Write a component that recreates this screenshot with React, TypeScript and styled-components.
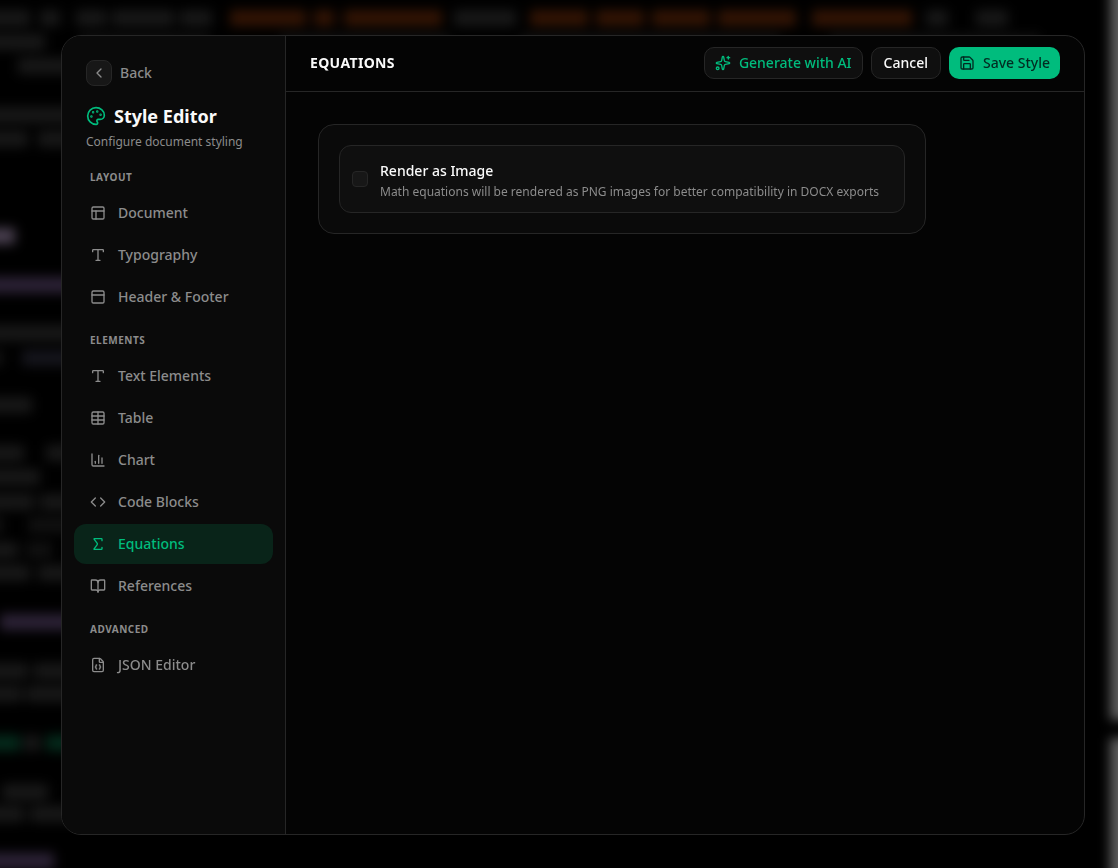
import React, { useState } from 'react';
import styled, { createGlobalStyle } from 'styled-components';
import {
  BookOpen,
  ChartColumn,
  ChevronLeft,
  Code,
  FileJson,
  Palette,
  PanelsTopLeft,
  PanelTop,
  Save,
  Sigma,
  Sparkles,
  Table,
  Type,
} from 'lucide-react';
import type { LucideIcon } from 'lucide-react';

const color = {
  accent: '#00bc7d',
  line: '#262626',
  panel: '#0a0a0a',
  raised: '#0f0f0f',
  control: '#171717',
  muted: '#8c8c8c',
  text: '#fafafa',
};

const GlobalStyle = createGlobalStyle`
  *, *::before, *::after { box-sizing: border-box; }
  body {
    margin: 0;
    background: #000;
    color: ${color.text};
    font-family: 'Noto Sans', sans-serif;
    font-size: 14px;
    line-height: 20px;
  }
  h1, h2, h3, p { margin: 0; }
  button { font: inherit; cursor: pointer; }
`;

const Overlay = styled.div`
  position: relative;
  display: flex;
  min-height: 100vh;
  padding: 35px 33px 33px 61px;
  overflow: hidden;
`;

const Backdrop = styled.svg`
  position: absolute;
  inset: 0;
  width: 100%;
  height: 100%;
`;

const Dialog = styled.div`
  position: relative;
  display: flex;
  flex: 1;
  min-width: 0;
  border: 1px solid ${color.line};
  border-radius: 20px;
  background: #040404;
  overflow: hidden;
`;

const Sidebar = styled.aside`
  flex: 0 0 224px;
  border-right: 1px solid ${color.line};
  background: ${color.panel};
`;

const SidebarHeader = styled.header`
  padding: 24px 24px 20px;
`;

const BackButton = styled.button`
  display: flex;
  align-items: center;
  gap: 8px;
  padding: 0;
  border: 0;
  background: none;
  color: ${color.muted};
  font-weight: 500;
`;

const BackIcon = styled.span`
  display: grid;
  place-items: center;
  width: 26px;
  height: 26px;
  border: 1px solid ${color.line};
  border-radius: 8px;
  background: ${color.control};
`;

const EditorTitle = styled.h1`
  display: flex;
  align-items: center;
  gap: 8px;
  margin-top: 16px;
  font-size: 18px;
  font-weight: 700;
  line-height: 28px;

  svg { color: ${color.accent}; }
`;

const Subtitle = styled.p`
  margin-top: 4px;
  color: ${color.muted};
  font-size: 12px;
  line-height: 16px;
`;

const Nav = styled.nav`
  display: flex;
  flex-direction: column;
  gap: 16px;
  padding: 0 12px 24px;
`;

const NavHeading = styled.h3`
  padding: 0 16px 8px;
  color: ${color.muted};
  font-size: 10px;
  font-weight: 700;
  line-height: 15px;
  letter-spacing: 0.05em;
  text-transform: uppercase;
`;

const NavList = styled.div`
  display: flex;
  flex-direction: column;
  gap: 2px;
`;

const NavItem = styled.button<{ $active: boolean }>`
  display: flex;
  align-items: center;
  gap: 12px;
  height: 40px;
  padding: 0 16px;
  border: 0;
  border-radius: 12px;
  background: ${({ $active }) => ($active ? '#092419' : 'transparent')};
  color: ${({ $active }) => ($active ? color.accent : color.muted)};
  font-weight: 500;
  text-align: left;
`;

const Content = styled.main`
  flex: 1;
  min-width: 0;
`;

const Toolbar = styled.header`
  display: flex;
  align-items: center;
  justify-content: space-between;
  height: 56px;
  padding: 0 24px 1px;
  border-bottom: 1px solid ${color.line};
`;

const PageTitle = styled.h2`
  font-size: 14px;
  font-weight: 700;
  letter-spacing: 0.025em;
  text-transform: uppercase;
`;

const Actions = styled.div`
  display: flex;
  gap: 8px;
`;

const ActionButton = styled.button<{ $variant: 'accent' | 'plain' | 'primary' }>`
  display: flex;
  align-items: center;
  gap: 8px;
  height: 32px;
  padding: 0 ${({ $variant }) => ($variant === 'plain' ? 12 : 10)}px;
  border: ${({ $variant }) => ($variant === 'primary' ? '0' : `1px solid ${color.line}`)};
  border-radius: 10px;
  background: ${({ $variant }) => ($variant === 'primary' ? color.accent : color.raised)};
  color: ${({ $variant }) =>
    ({ accent: color.accent, plain: color.text, primary: '#022c22' })[$variant]};
  font-weight: 500;
  white-space: nowrap;
`;

const Body = styled.div`
  padding: 32px;
`;

const Card = styled.section`
  max-width: 608px;
  padding: 20px;
  border: 1px solid ${color.line};
  border-radius: 16px;
  background: ${color.panel};
`;

const Option = styled.label`
  display: flex;
  align-items: center;
  gap: 12px;
  padding: 12px;
  border: 1px solid ${color.line};
  border-radius: 12px;
  background: ${color.raised};
  cursor: pointer;
`;

const Checkbox = styled.input`
  appearance: none;
  flex: none;
  width: 16px;
  height: 16px;
  margin: 0;
  border: 1px solid ${color.line};
  border-radius: 4px;
  background: ${color.control};

  &:checked { background: ${color.accent}; }
`;

const OptionText = styled.span`
  display: flex;
  flex-direction: column;
`;

const OptionTitle = styled.span`
  font-weight: 500;
  line-height: 26px;
`;

const OptionHint = styled.span`
  color: ${color.muted};
  font-size: 12px;
  line-height: 16px;
`;

type Entry = { label: string; icon: LucideIcon };

const sections: { title: string; entries: Entry[] }[] = [
  {
    title: 'Layout',
    entries: [
      { label: 'Document', icon: PanelsTopLeft },
      { label: 'Typography', icon: Type },
      { label: 'Header & Footer', icon: PanelTop },
    ],
  },
  {
    title: 'Elements',
    entries: [
      { label: 'Text Elements', icon: Type },
      { label: 'Table', icon: Table },
      { label: 'Chart', icon: ChartColumn },
      { label: 'Code Blocks', icon: Code },
      { label: 'Equations', icon: Sigma },
      { label: 'References', icon: BookOpen },
    ],
  },
  { title: 'Advanced', entries: [{ label: 'JSON Editor', icon: FileJson }] },
];

// Dimmed source lines behind the dialog: x, y (line centre), width, fill
const grey = '#181818';
const faint = '#101010';
const violet = '#2c2236';
const rust = '#331404';
const teal = '#042a1b';
const smears: [number, number, number, string][] = [
  [-20, 18, 50, grey], [40, 18, 20, grey], [76, 18, 30, grey], [112, 18, 62, grey], [180, 18, 32, grey],
  [230, 18, 76, rust], [314, 18, 20, rust], [344, 18, 98, rust],
  [454, 18, 62, grey],
  [530, 18, 58, rust], [596, 18, 48, rust], [652, 18, 58, rust], [718, 18, 78, rust], [812, 18, 100, rust],
  [926, 18, 22, grey], [976, 18, 32, grey],
  [-20, 42, 65, grey], [80, 42, 130, faint], [280, 42, 170, faint], [520, 42, 260, faint], [830, 42, 210, faint],
  [18, 66, 70, grey],
  [-20, 115, 110, grey], [-20, 139, 48, grey], [38, 139, 50, grey],
  [-20, 236, 35, '#4a4050'],
  [-20, 285, 110, violet],
  [-20, 333, 110, grey], [22, 358, 60, '#15151c'], [-20, 358, 24, faint],
  [-20, 405, 52, grey],
  [-20, 453, 44, grey], [46, 453, 40, grey],
  [-20, 477, 60, grey], [-20, 502, 54, grey], [40, 502, 50, grey],
  [28, 525, 60, faint], [-20, 525, 24, faint],
  [-20, 550, 38, grey], [26, 550, 26, faint], [-20, 573, 50, grey], [38, 573, 50, grey],
  [0, 622, 90, violet],
  [-20, 671, 48, grey], [34, 671, 50, grey], [-20, 694, 42, grey], [26, 694, 60, grey],
  [-20, 743, 40, teal], [24, 743, 16, grey], [46, 743, 40, teal],
  [2, 792, 46, grey], [-20, 814, 44, grey], [30, 814, 50, grey],
  [-20, 861, 74, violet],
];

function PageBackdrop() {
  return (
    <Backdrop aria-hidden="true">
      <defs>
        <filter id="soften" x="-20%" y="-20%" width="140%" height="140%" colorInterpolationFilters="sRGB">
          <feGaussianBlur stdDeviation="6" />
        </filter>
      </defs>
      <g filter="url(#soften)">
        {smears.map(([x, y, width, fill], i) => (
          <rect key={i} x={x} y={y - 8} width={width} height={16} fill={fill} />
        ))}
        <svg x="100%" overflow="visible">
          <rect x={-8} y={-30} width={60} height={750} fill="#5e5e5e" />
          <rect x={-8} y={738} width={60} height={200} fill="#5e5e5e" />
        </svg>
      </g>
    </Backdrop>
  );
}

export default function App() {
  const [active, setActive] = useState('Equations');
  const [asImage, setAsImage] = useState(false);

  return (
    <>
      <GlobalStyle />
      <Overlay>
        <PageBackdrop />
        <Dialog role="dialog" aria-labelledby="editor-title">
          <Sidebar>
            <SidebarHeader>
              <BackButton type="button">
                <BackIcon>
                  <ChevronLeft size={16} />
                </BackIcon>
                Back
              </BackButton>
              <EditorTitle id="editor-title">
                <Palette size={20} />
                Style Editor
              </EditorTitle>
              <Subtitle>Configure document styling</Subtitle>
            </SidebarHeader>
            <Nav>
              {sections.map(({ title, entries }) => (
                <section key={title}>
                  <NavHeading>{title}</NavHeading>
                  <NavList>
                    {entries.map(({ label, icon: Icon }) => (
                      <NavItem
                        key={label}
                        type="button"
                        $active={label === active}
                        aria-current={label === active ? 'page' : undefined}
                        onClick={() => setActive(label)}
                      >
                        <Icon size={16} />
                        {label}
                      </NavItem>
                    ))}
                  </NavList>
                </section>
              ))}
            </Nav>
          </Sidebar>
          <Content>
            <Toolbar>
              <PageTitle>{active}</PageTitle>
              <Actions>
                <ActionButton type="button" $variant="accent">
                  <Sparkles size={16} />
                  Generate with AI
                </ActionButton>
                <ActionButton type="button" $variant="plain">
                  Cancel
                </ActionButton>
                <ActionButton type="button" $variant="primary">
                  <Save size={16} />
                  Save Style
                </ActionButton>
              </Actions>
            </Toolbar>
            <Body>
              <Card>
                <Option>
                  <Checkbox
                    type="checkbox"
                    checked={asImage}
                    onChange={(event) => setAsImage(event.target.checked)}
                  />
                  <OptionText>
                    <OptionTitle>Render as Image</OptionTitle>
                    <OptionHint>
                      Math equations will be rendered as PNG images for better compatibility in DOCX exports
                    </OptionHint>
                  </OptionText>
                </Option>
              </Card>
            </Body>
          </Content>
        </Dialog>
      </Overlay>
    </>
  );
}
